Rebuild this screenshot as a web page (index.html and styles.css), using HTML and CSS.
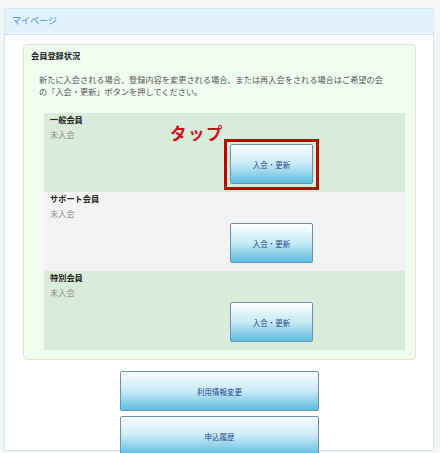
FILE: index.html
```html
<!DOCTYPE html>
<html>
    <head>
        <meta charset="utf-8" />
        <title>マイページ</title>
        <link rel="stylesheet" href="styles.css">
    </head>

    <body>
        <div class="m-panel">
            <div class="hd">マイページ</div>

            <div class="bd">
                <div class="m-status">
                    <h2>会員登録状況</h2>
                    <p class="desc">新たに入会される場合、登録内容を変更される場合、または再入会をされる場合はご希望の会<br>の「入会・更新」ボタンを押してください。</p>

                    <ul class="list">
                        <li class="odd">
                            <h3>一般会員</h3>
                            <p>未入会</p>
                            <div class="act">
                                <a class="u-btn" href="#">入会・更新</a>
                                <span class="tip">タップ</span>
                                <span class="mark"></span>
                            </div>
                        </li>
                        <li>
                            <h3>サポート会員</h3>
                            <p>未入会</p>
                            <div class="act">
                                <a class="u-btn" href="#">入会・更新</a>
                            </div>
                        </li>
                        <li class="odd">
                            <h3>特別会員</h3>
                            <p>未入会</p>
                            <div class="act">
                                <a class="u-btn" href="#">入会・更新</a>
                            </div>
                        </li>
                    </ul>
                </div>

                <div class="m-menu">
                    <a class="u-btn" href="#">利用情報変更</a>
                    <a class="u-btn" href="#">申込履歴</a>
                </div>
            </div>
        </div>
    </body>
</html>
```

FILE: styles.css
```css
*{margin:0;padding:0;}
li{list-style:none;}
a{text-decoration:none;}

body{background:#f5f5f5;padding:8px 6px 0 4px;height:453px;box-sizing:border-box;overflow:hidden;font-family:"Noto Sans CJK JP","Noto Sans",sans-serif;color:#333;}

.m-panel{background:#fff;border:1px solid #d3e7f4;height:443px;box-sizing:border-box;}
.m-panel .hd{height:25px;line-height:24px;padding-left:7px;background:#e2f3fc;border-bottom:1px solid #cde3f2;color:#3b8fd0;font-size:9px;}
.m-panel .bd{padding:9px 17px 0 18px;}

.m-status{background:#f0fef0;border:1px solid #e7e4c8;border-radius:4px;padding:4px 10px 9px 7px;}
.m-status h2{font-size:8.2px;line-height:12px;font-weight:bold;color:#222;}
.m-status .desc{margin:12px 0 0 8px;font-size:8.2px;line-height:12px;color:#555;}

.m-status .list{margin:16px 0 0 13px;}
.m-status .list li{background:#f3f3f3;padding:0 0 8px 6px;}
.m-status .list li.odd{background:#d9ecd9;}
.m-status .list h3{font-size:8.2px;line-height:12px;font-weight:bold;color:#222;}
.m-status .list p{font-size:8.2px;line-height:19px;color:#888;}
.m-status .act{position:relative;width:83px;margin:0 0 0 180px;}

.u-btn{display:flex;align-items:center;justify-content:center;width:83px;height:40px;box-sizing:border-box;border:1px solid #6b8fb3;border-radius:2px;background:linear-gradient(#fbfeff,#c8eaf5 50%,#5dbde1);color:#24478f;font-size:7.5px;}

.act .tip{position:absolute;left:-60px;top:-23px;font-size:16.5px;font-weight:bold;color:#c8101c;letter-spacing:1.5px;white-space:nowrap;}
.act .mark{position:absolute;left:-6px;top:-5px;right:-6px;bottom:-6px;border:3px solid #c00000;}

.m-menu{display:flex;flex-direction:column;align-items:center;gap:5px;margin-top:11px;}
.m-menu .u-btn{width:199px;}
```
